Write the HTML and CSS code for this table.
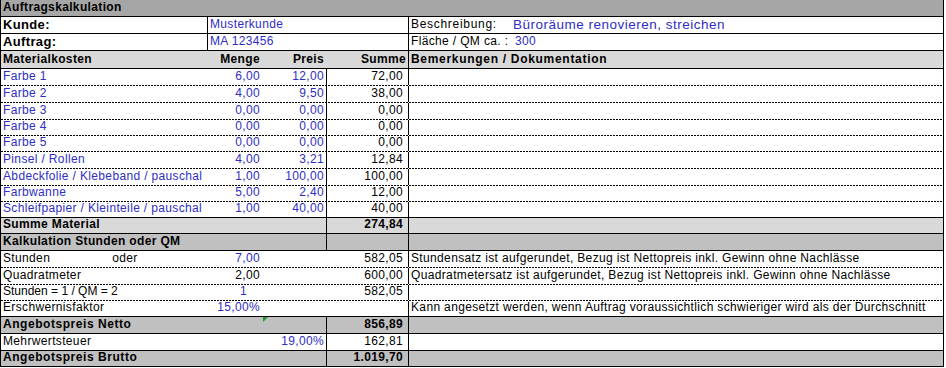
FILE: index.html
```html
<!DOCTYPE html>
<html lang="de">
<head>
<meta charset="utf-8">
<title>Auftragskalkulation</title>
<link rel="stylesheet" href="styles.css">
</head>
<body>
<div class="sheet">
  <div class="row title h17"><div class="c all b">Auftragskalkulation</div></div>

  <div class="row h17">
    <div class="c b big">Kunde:</div>
    <div class="c bl blue s24">Musterkunde</div>
    <div class="c bl info"><span class="lab wide">Beschreibung:</span><span class="blue desc">Büroräume renovieren, streichen</span></div>
  </div>
  <div class="row h17">
    <div class="c b big">Auftrag:</div>
    <div class="c bl blue s24">MA 123456</div>
    <div class="c bl info"><span class="lab">Fläche / QM ca. :</span><span class="blue val2">300</span></div>
  </div>

  <div class="row light h18">
    <div class="c b">Materialkosten</div>
    <div class="c b r">Menge</div>
    <div class="c b r">Preis</div>
    <div class="c b r">Summe</div>
    <div class="c b bl wide">Bemerkungen / Dokumentation</div>
  </div>

  <div class="row dash h17"><div class="c blue">Farbe 1</div><div class="c blue r">6,00</div><div class="c blue r">12,00</div><div class="c bl r sum">72,00</div><div class="c bl"></div></div>
  <div class="row dash h17"><div class="c blue">Farbe 2</div><div class="c blue r">4,00</div><div class="c blue r">9,50</div><div class="c bl r sum">38,00</div><div class="c bl"></div></div>
  <div class="row dash h17"><div class="c blue">Farbe 3</div><div class="c blue r">0,00</div><div class="c blue r">0,00</div><div class="c bl r sum">0,00</div><div class="c bl"></div></div>
  <div class="row dash h16"><div class="c blue">Farbe 4</div><div class="c blue r">0,00</div><div class="c blue r">0,00</div><div class="c bl r sum">0,00</div><div class="c bl"></div></div>
  <div class="row dash h16"><div class="c blue">Farbe 5</div><div class="c blue r">0,00</div><div class="c blue r">0,00</div><div class="c bl r sum">0,00</div><div class="c bl"></div></div>
  <div class="row dash h17"><div class="c blue">Pinsel / Rollen</div><div class="c blue r">4,00</div><div class="c blue r">3,21</div><div class="c bl r sum">12,84</div><div class="c bl"></div></div>
  <div class="row dash h17"><div class="c blue">Abdeckfolie / Klebeband / pauschal</div><div class="c blue r">1,00</div><div class="c blue r">100,00</div><div class="c bl r sum">100,00</div><div class="c bl"></div></div>
  <div class="row dash h16"><div class="c blue">Farbwanne</div><div class="c blue r">5,00</div><div class="c blue r">2,40</div><div class="c bl r sum">12,00</div><div class="c bl"></div></div>
  <div class="row h16"><div class="c blue">Schleifpapier / Kleinteile / pauschal</div><div class="c blue r">1,00</div><div class="c blue r">40,00</div><div class="c bl r sum">40,00</div><div class="c bl"></div></div>

  <div class="row light h16">
    <div class="c b s13">Summe Material</div>
    <div class="c bl b r sum">274,84</div>
    <div class="c bl"></div>
  </div>
  <div class="row mid h17">
    <div class="c b s13">Kalkulation Stunden oder QM</div>
    <div class="c bl"></div>
    <div class="c bl"></div>
  </div>

  <div class="row dash h17"><div class="c">Stunden<span class="oder">oder</span></div><div class="c blue r">7,00</div><div class="c"></div><div class="c r sum">582,05</div><div class="c bl">Stundensatz ist aufgerundet, Bezug ist Nettopreis inkl. Gewinn ohne Nachlässe</div></div>
  <div class="row dash h17"><div class="c">Quadratmeter</div><div class="c r">2,00</div><div class="c"></div><div class="c r sum">600,00</div><div class="c bl">Quadratmetersatz ist aufgerundet, Bezug ist Nettopreis inkl. Gewinn ohne Nachlässe</div></div>
  <div class="row dash h16"><div class="c tight">Stunden = 1 / QM = 2</div><div class="c blue one">1</div><div class="c"></div><div class="c r sum">582,05</div><div class="c bl"></div></div>
  <div class="row h16"><div class="c">Erschwernisfaktor</div><div class="c blue r">15,00%</div><div class="c"></div><div class="c"></div><div class="c bl">Kann angesetzt werden, wenn Auftrag voraussichtlich schwieriger wird als der Durchschnitt</div></div>

  <div class="row mid h17">
    <div class="c b s12 offer">Angebotspreis Netto</div>
    <div class="c flag"></div>
    <div class="c bl b r sum">856,89</div>
    <div class="c bl"></div>
  </div>
  <div class="row h17">
    <div class="c s12">Mehrwertsteuer</div>
    <div class="c blue r">19,00%</div>
    <div class="c bl r sum">162,81</div>
    <div class="c bl"></div>
  </div>
  <div class="row mid h16">
    <div class="c b s13 offer">Angebotspreis Brutto</div>
    <div class="c bl b r sum">1.019,70</div>
    <div class="c bl"></div>
  </div>
</div>
</body>
</html>
```
FILE: styles.css
```css
* {
  box-sizing: border-box;
  margin: 0;
  padding: 0;
}

body {
  margin: 0;
  background: #ffffff;
  font-family: "Liberation Sans", Arial, sans-serif;
  font-size: 12px;
  letter-spacing: 0.35px;
  color: #000000;
}

.sheet {
  width: 944px;
  border-left: 1px solid #000;
  border-right: 1px solid #000;
}

.row {
  display: grid;
  grid-template-columns: 206px 55px 64px 82px 535px;
  border-bottom: 1px solid #000;
}

.h16 { height: 16px; }
.h17 { height: 17px; }
.h18 { height: 18px; }

.row.dash {
  border-bottom: none;
  padding-bottom: 1px;
  background-image: repeating-linear-gradient(90deg, #000 0 2px, transparent 2px 3px);
  background-size: 100% 1px;
  background-position: left bottom;
  background-repeat: no-repeat;
}

.title { background: #a6a6a6; }
.light { background: #d9d9d9; }
.mid { background: #c0c0c0; }

.c {
  display: flex;
  align-items: flex-end;
  line-height: 15px;
  padding: 0 2px 1px 2px;
  white-space: nowrap;
  overflow: hidden;
  min-width: 0;
}

.all { grid-column: 1 / -1; }
.s24 { grid-column: 2 / 5; }
.s13 { grid-column: 1 / 4; }
.s12 { grid-column: 1 / 3; }

.r { justify-content: flex-end; }
.sum { padding-right: 5px; }
.bl { border-left: 1px solid #000; }
.b { font-weight: bold; }
.big { font-size: 13px; }
.blue { color: #2e2ec4; }
.wide { letter-spacing: 0.7px; }
.offer { letter-spacing: 0.55px; }
.tight { letter-spacing: 0; }

.info .lab {
  width: 102px;
  flex: none;
}

.desc {
  font-size: 13.5px;
  letter-spacing: 0.5px;
}

.val2 { padding-left: 2px; }

.oder { margin-left: 62px; }

.one { padding-left: 33px; }

.flag { position: relative; }

.flag::before {
  content: "";
  position: absolute;
  left: 1px;
  top: 0;
  width: 0;
  height: 0;
  border-top: 5px solid #229922;
  border-right: 5px solid transparent;
}
```
